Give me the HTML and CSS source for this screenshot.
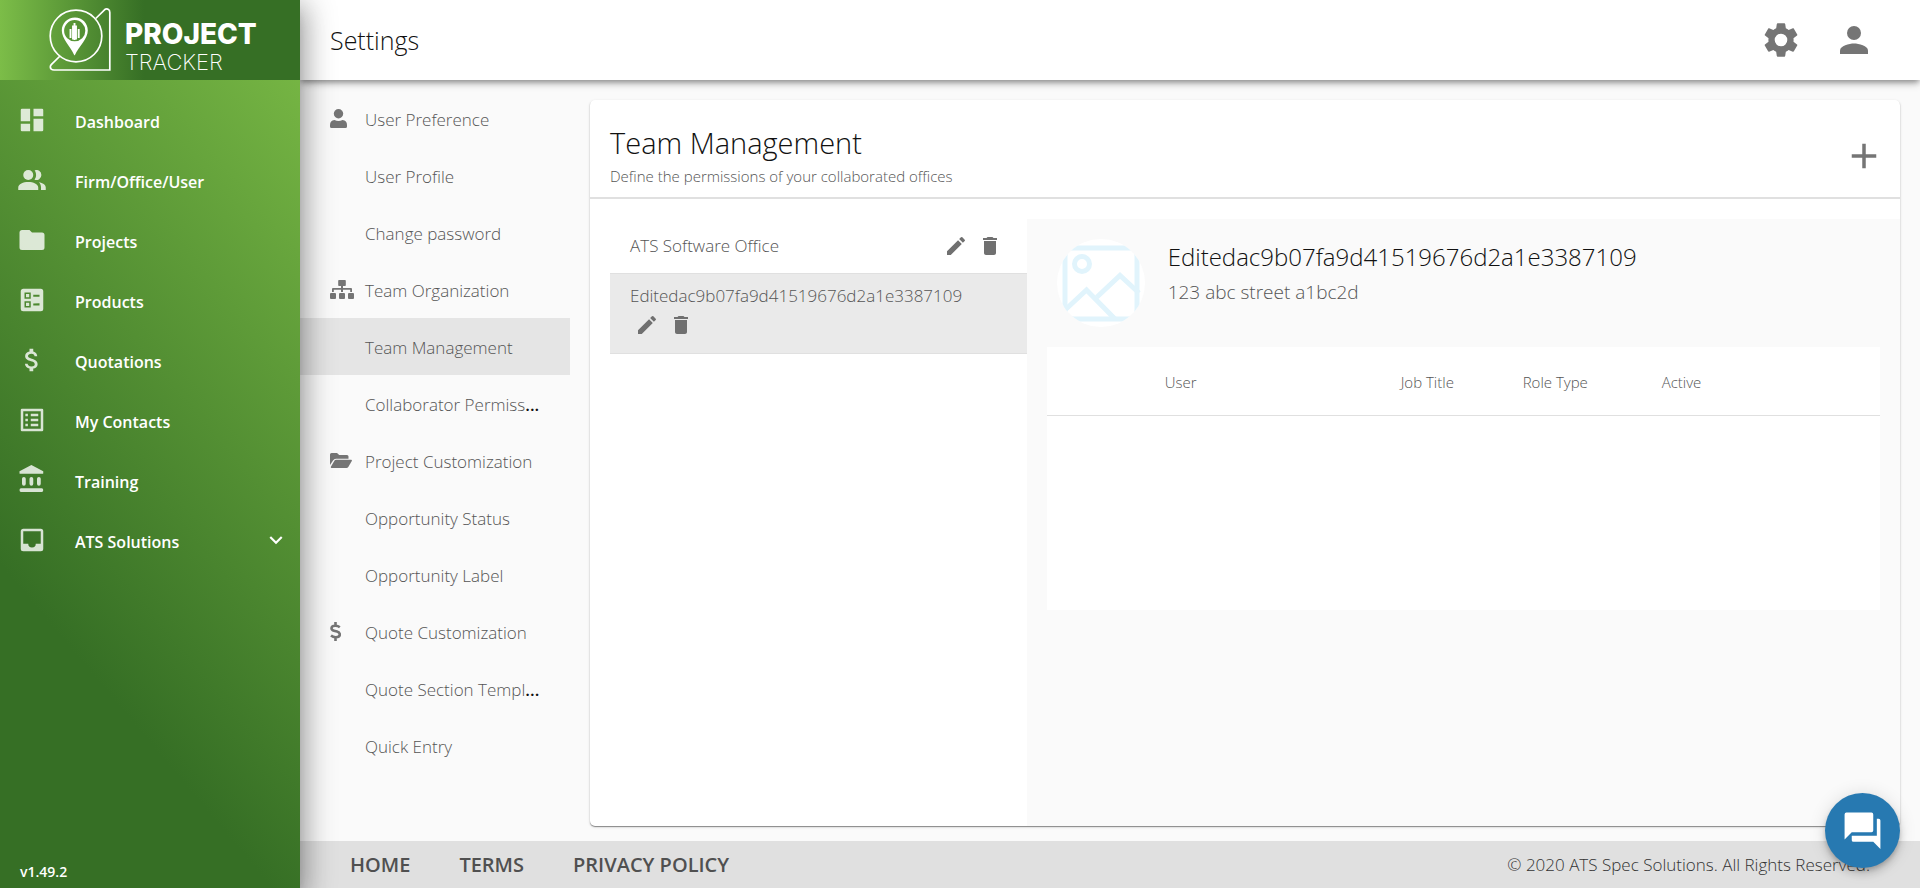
FILE: index.html
```html
<!DOCTYPE html>
<html lang="en">
<head>
<meta charset="utf-8">
<title>Settings - Project Tracker</title>
<link rel="stylesheet" href="styles.css">
</head>
<body>
<svg class="sprite" aria-hidden="true">
  <symbol id="pencil" viewBox="0 0 24 24"><path d="M3 17.25V21h3.75L17.81 9.94l-3.75-3.75L3 17.25zM20.71 7.04a1 1 0 0 0 0-1.41l-2.34-2.34a1 1 0 0 0-1.41 0l-1.83 1.83 3.75 3.75 1.83-1.83z"/></symbol>
  <symbol id="trash" viewBox="0 0 24 24"><path d="M6 19c0 1.1.9 2 2 2h8c1.100 0 2-.9 2-2V7H6v12zM19 4h-3.500l-1-1h-5l-1 1H5v2h14V4z"/></symbol>
</svg>
<div class="app">
  <aside class="sidebar">
    <a class="brand" href="#">
      <svg class="brand-mark" viewBox="0 0 62 64" fill="none" stroke="#fff" stroke-width="1.700">
        <circle cx="27" cy="28" r="25.800"/>
        <path d="M46.700 10.500 55.500 1.800Q57.500.300 59.500 1.500 60.800 2.300 60.800 4.500V62H5Q1.500 62 1.300 59 1.300 57.500 2.500 56.300L11 48"/>
        <path fill="#fff" stroke="none" fill-rule="evenodd" d="M26 9.500c-7.500 0-13.200 5.700-13.200 13 0 8 8.200 15.500 12.500 24.700h.5c4.500-9.200 13-16.700 13-24.700 0-7.300-5.500-13-12.800-13zm-.3 2.600a10.600 10.600 0 1 1 0 21.200 10.600 10.600 0 0 1 0-21.200z"/>
        <path stroke-width="1.900" d="M21.500 21v9M24 17.500v14M27 17.500v14M29.700 21v9M25.500 15v17"/>
      </svg>
      <span class="brand-text"><strong>PROJECT</strong><span>TRACKER</span></span>
    </a>
    <nav class="menu">
      <a href="#"><svg viewBox="0 0 24 24"><path d="M4 3h6.500v10H3V4a1 1 0 0 1 1-1zm9.200 0H20a1 1 0 0 1 1 1v5h-7.800zM3 15h7.500v6H4a1 1 0 0 1-1-1zm10.200-4H21v9a1 1 0 0 1-1 1h-6.800z"/></svg><span>Dashboard</span></a>
      <a href="#"><svg viewBox="0 0 24 24"><circle cx="9" cy="8" r="4"/><path d="M1 18c0-3 4-4.500 8-4.500s8 1.500 8 4.500v2H1zM14 4.300A4 4 0 1 1 14 11.700c1.700-2.200 1.700-5.200 0-7.400zM17.500 13.700c3 .4 5.500 1.900 5.500 4.300v2h-3.800v-2c0-1.800-.6-3.200-1.700-4.300z"/></svg><span>Firm/Office/User</span></a>
      <a href="#"><svg viewBox="0 0 24 24"><path d="M4 4h6l2 2h8a2 2 0 0 1 2 2v10a2 2 0 0 1-2 2H4a2 2 0 0 1-2-2V6c0-1.100.9-2 2-2z"/></svg><span>Projects</span></a>
      <a href="#"><svg viewBox="0 0 24 24"><path fill-rule="evenodd" d="M5 3h14a2 2 0 0 1 2 2v14a2 2 0 0 1-2 2H5a2 2 0 0 1-2-2V5c0-1.100.9-2 2-2zm1 3v5h5V6zm1.200 1.200h2.600v2.600H7.200zM6 13v5h5v-5zm1.200 1.200h2.600v2.600H7.200zM13 7.700v1.600h5V7.700zm0 7v1.600h5v-1.600z"/></svg><span>Products</span></a>
      <a href="#"><svg viewBox="0 0 24 24"><path d="M11.800 10.900c-2.270-.59-3-1.200-3-2.150 0-1.090 1.010-1.850 2.700-1.850 1.780 0 2.440.85 2.500 2.100h2.210c-.07-1.720-1.120-3.300-3.210-3.810V3h-3v2.160c-1.940.42-3.500 1.680-3.500 3.610 0 2.310 1.910 3.460 4.700 4.130 2.500.6 3 1.480 3 2.410 0 .69-.49 1.790-2.700 1.790-2.060 0-2.870-.92-2.980-2.100h-2.200c.12 2.190 1.760 3.420 3.680 3.830V21h3v-2.150c1.950-.37 3.500-1.500 3.500-3.550 0-2.840-2.430-3.810-4.700-4.400z"/></svg><span>Quotations</span></a>
      <a href="#"><svg viewBox="0 0 24 24"><path fill-rule="evenodd" d="M4 3h16a1 1 0 0 1 1 1v16a1 1 0 0 1-1 1H4a1 1 0 0 1-1-1V4a1 1 0 0 1 1-1zm1 2v14h14V5zM6.700 7h2v2h-2zM11 7h6v2h-6zM6.700 11h2v2h-2zM11 11h6v2h-6zM6.700 15h2v2h-2zM11 15h6v2h-6z"/></svg><span>My Contacts</span></a>
      <a href="#"><svg viewBox="0 0 24 24"><path d="M11.500 0 21 5v1.500q0 .5-.5.500h-18Q2 7 2 6.500V5zM3.200 18.500h16.600q1.200 0 1.200 1.500t-1.200 1.500H3.200Q2 21.500 2 20t1.200-1.500z"/><path d="M5.500 11v4M11.500 11v4M17.500 11v4" stroke="#fff" stroke-width="3" stroke-linecap="round"/></svg><span>Training</span></a>
      <a href="#"><svg viewBox="0 0 24 24"><path fill-rule="evenodd" d="M5 3h14a2 2 0 0 1 2 2v14a2 2 0 0 1-2 2H5a2 2 0 0 1-2-2V5c0-1.100.9-2 2-2zm0 2v10h4a3 3 0 0 0 6 0h4V5z"/></svg><span>ATS Solutions</span><svg class="chevron" viewBox="0 0 24 24"><path d="M7.400 8.600 12 13.200l4.600-4.600L18 10l-6 6-6-6z"/></svg></a>
    </nav>
    <p class="version">v1.49.2</p>
  </aside>

  <div class="page">
    <header class="topbar">
      <h1>Settings</h1>
      <button type="button" aria-label="Settings"><svg viewBox="0 0 24 24"><path d="M19.140 12.940c.04-.3.060-.61.060-.94 0-.32-.02-.64-.07-.94l2.030-1.580c.18-.14.23-.41.120-.61l-1.920-3.320c-.12-.22-.37-.29-.59-.22l-2.390.96c-.5-.38-1.030-.7-1.620-.94l-.36-2.540c-.04-.24-.24-.41-.48-.41h-3.840c-.24 0-.43.17-.47.410l-.36 2.540c-.59.24-1.130.57-1.620.94l-2.390-.96c-.22-.08-.47 0-.59.22L2.740 8.870c-.12.21-.08.47.120.61l2.030 1.580c-.05.3-.09.63-.09.940s.02.64.070.94l-2.030 1.580c-.18.14-.23.41-.12.61l1.920 3.320c.12.22.37.29.59.22l2.390-.96c.5.38 1.030.7 1.620.940l.36 2.540c.05.24.24.41.48.410h3.840c.24 0 .44-.17.470-.41l.36-2.540c.59-.24 1.130-.56 1.620-.94l2.390.96c.22.080.47 0 .59-.22l1.920-3.320c.12-.22.070-.47-.12-.61l-2.010-1.580zM12 15.600a3.600 3.600 0 1 1 0-7.200 3.600 3.600 0 0 1 0 7.200z"/></svg></button>
      <button type="button" aria-label="Account"><svg viewBox="0 0 24 24"><circle cx="12" cy="8" r="4"/><path d="M12 14c-2.670 0-8 1.340-8 4v2h16v-2c0-2.660-5.330-4-8-4z"/></svg></button>
    </header>

    <div class="content">
      <nav class="settings-nav">
        <a href="#"><svg viewBox="0 0 17 19"><circle cx="8.500" cy="4.700" r="4.700"/><path d="M4.500 11Q8.500 12.800 12.500 11 17 11.500 17 16v1.500A1.500 1.500 0 0 1 15.500 19h-14A1.500 1.500 0 0 1 0 17.500V16q0-4.500 4.500-5z"/></svg><span><i>User Preference</i></span></a>
        <a href="#"><span><i>User Profile</i></span></a>
        <a href="#"><span><i>Change password</i></span></a>
        <a href="#"><svg class="wide" viewBox="0 0 24 19"><path d="M9 0h6a.8.8 0 0 1 .8.800v4.400a.8.8 0 0 1-.8.800h-2v2h8a1 1 0 0 1 1 1v3h-1.800V9.800H13V12h-2V9.800H3.800V12H2V9a1 1 0 0 1 1-1h8V6H9a.8.8 0 0 1-.8-.8V.8A.8.8 0 0 1 9 0z"/><rect y="13" width="6" height="6" rx="1"/><rect x="9" y="13" width="6" height="6" rx="1"/><rect x="18" y="13" width="6" height="6" rx="1"/></svg><span><i>Team Organization</i></span></a>
        <a href="#" class="active" aria-current="page"><span><i>Team Management</i></span></a>
        <a href="#"><span><i>Collaborator Permiss</i>...</span></a>
        <a href="#"><svg class="folder" viewBox="0 0 22 15"><path d="M1.500 0H7l2.200 2H17a1.500 1.500 0 0 1 1.500 1.500V5.700H6Q4 5.700 3 7.500L0 12V1.500A1.500 1.500 0 0 1 1.500 0z"/><path d="M6 6.700h15.200q1 .2.600 1.200l-3.500 6q-.7 1.100-1.800 1.100H1.500q-1-.2-.6-1.200l3.500-6Q5 6.800 6 6.700z"/></svg><span><i>Project Customization</i></span></a>
        <a href="#"><span><i>Opportunity Status</i></span></a>
        <a href="#"><span><i>Opportunity Label</i></span></a>
        <a href="#"><svg class="dollar" viewBox="0 0 11 19" fill="none"><path stroke="#757575" stroke-width="2.600" d="M9.800 5.200Q7.800 3.700 5.200 3.800 1.500 4 1.500 6.200 1.500 8 4 8.700L7 9.500q2.800.8 2.800 3 0 2.500-3.800 2.700-2.900.1-5-1.600M5.500 0v4M5.500 15v4"/></svg><span><i>Quote Customization</i></span></a>
        <a href="#"><span><i>Quote Section Templ</i>...</span></a>
        <a href="#"><span><i>Quick Entry</i></span></a>
      </nav>

      <main class="card">
        <header class="card-head">
          <div>
            <h2>Team Management</h2>
            <p>Define the permissions of your collaborated offices</p>
          </div>
          <button type="button" aria-label="Add team"><svg viewBox="0 0 24 24"><path d="M19 13h-6v6h-2v-6H5v-2h6V5h2v6h6z"/></svg></button>
        </header>
        <div class="card-body">
          <ul class="offices">
            <li>
              <span>ATS Software Office</span>
              <div class="actions">
                <button type="button" aria-label="Edit"><svg viewBox="0 0 24 24"><use href="#pencil"/></svg></button><button type="button" aria-label="Delete"><svg viewBox="0 0 24 24"><use href="#trash"/></svg></button>
              </div>
            </li>
            <li class="selected">
              <span>Editedac9b07fa9d41519676d2a1e3387109</span>
              <div class="actions">
                <button type="button" aria-label="Edit"><svg viewBox="0 0 24 24"><use href="#pencil"/></svg></button><button type="button" aria-label="Delete"><svg viewBox="0 0 24 24"><use href="#trash"/></svg></button>
              </div>
            </li>
          </ul>
          <section class="detail">
            <div class="office">
              <svg class="avatar" viewBox="0 0 88 88">
                <clipPath id="round"><circle cx="44" cy="44" r="44"/></clipPath>
                <circle cx="44" cy="44" r="44" fill="#fff"/>
                <g clip-path="url(#round)" fill="none" stroke="#e1f4fc" stroke-width="5">
                  <rect x="8" y="9" width="72" height="71" rx="5"/>
                  <circle cx="25" cy="25" r="7.500"/>
                  <path d="M8 71 29.500 51 58 80M40 58 63 36.500 82 54"/>
                </g>
              </svg>
              <div>
                <h3>Editedac9b07fa9d41519676d2a1e3387109</h3>
                <p>123 abc street a1bc2d</p>
              </div>
            </div>
            <div class="table-wrap">
              <table>
                <colgroup><col class="c-pic"><col class="c-user"><col class="c-job"><col class="c-role"><col></colgroup>
                <thead><tr><td></td><th>User</th><th>Job Title</th><th>Role Type</th><th>Active</th></tr></thead>
              </table>
            </div>
          </section>
        </div>
      </main>
    </div>

    <footer class="footer">
      <a href="#">HOME</a><a href="#">TERMS</a><a href="#">PRIVACY POLICY</a>
      <p>© 2020 ATS Spec Solutions. All Rights Reserved.</p>
    </footer>
  </div>
</div>
<button class="chat" type="button" aria-label="Chat"><svg viewBox="0 0 24 24"><path d="M21 6h-1v9.500H6V18q0 .9 1 .9h11l4 4V7q0-1-1-1z" transform="translate(0 -.6)"/><path d="M18 12V3q0-1-1-1H3Q2 2 2 3v14l4-4h11q1 0 1-1z"/></svg></button>
</body>
</html>
```

FILE: styles.css
```css
* { box-sizing: border-box; }
body {
  margin: 0;
  font-family: "Open Sans", sans-serif;
  font-size: 17px;
  font-weight: 300;
  color: #111;
  background: #fafafa;
}
h1, h2, h3, p, ul { margin: 0; padding: 0; font-weight: inherit; }
a { color: inherit; text-decoration: none; }
button { padding: 0; border: 0; background: none; cursor: pointer; }
svg { display: block; flex: none; }
.sprite { position: absolute; width: 0; height: 0; }

.app { display: flex; min-height: 100vh; }

/* Sidebar */
.sidebar {
  position: relative;
  z-index: 3;
  flex: none;
  width: 300px;
  display: flex;
  flex-direction: column;
  color: #fff;
  background: linear-gradient(50deg, #366f25 26%, #7bbb46 100%);
  box-shadow: 0 8px 10px -5px rgba(0, 0, 0, .2), 0 16px 24px 2px rgba(0, 0, 0, .14), 0 6px 30px 5px rgba(0, 0, 0, .3);
}
.brand {
  display: flex;
  gap: 14px;
  height: 80px;
  padding: 8px 0 0 49px;
  background: linear-gradient(90deg, #7cbd48, #366f25 48%);
}
.brand-mark { width: 62px; height: 64px; }
.brand-text {
  display: flex;
  flex-direction: column;
  font-family: Inter, sans-serif;
  padding-top: 11px;
}
.brand-text strong { font-size: 28px; line-height: 30px; font-weight: 800; }
.brand-text span { font-size: 22px; line-height: 26px; font-weight: 200; }
.menu { flex: 1; padding-top: 10px; }
.menu a {
  display: flex;
  align-items: center;
  height: 60px;
  padding: 0 11px 0 17px;
  gap: 28px;
  font-size: 16px;
  font-weight: 600;
}
.menu span { padding-top: 3px; }
.menu svg { width: 30px; height: 30px; fill: #fff; opacity: .8; }
.menu .chevron { width: 26px; height: 26px; margin-left: auto; opacity: 1; }
.version { padding: 0 20px 6px; font-size: 14px; line-height: 20px; font-weight: 600; }

.page { flex: 1; min-width: 0; display: flex; flex-direction: column; }

/* Top bar */
.topbar {
  position: relative;
  z-index: 2;
  display: flex;
  align-items: center;
  gap: 31px;
  height: 80px;
  padding: 0 45px 0 30px;
  background: #fff;
  box-shadow: 0 3px 5px -1px rgba(0, 0, 0, .3), 0 5px 8px -1px rgba(0, 0, 0, .2);
}
.topbar h1 { flex: 1; font-size: 25px; line-height: 32px; }
.topbar svg, .card-head svg { width: 42px; height: 42px; fill: #757575; }

.content { flex: 1; display: flex; gap: 20px; padding: 10px 20px 15px 0; }

/* Settings navigation */
.settings-nav { flex: none; width: 270px; }
.settings-nav a {
  display: flex;
  align-items: center;
  height: 57px;
  padding: 0 20px 0 65px;
}
.settings-nav svg { width: 17px; height: 19px; margin: 0 18px 0 -35px; fill: #757575; }
.settings-nav svg.wide { width: 24px; margin-right: 11px; }
.settings-nav svg.folder { width: 22px; height: 15px; margin-right: 13px; }
.settings-nav svg.dollar { width: 11px; margin-right: 24px; fill: none; }
.settings-nav span { padding-top: 2px; white-space: nowrap; font-weight: 600; }
.settings-nav i { font-style: normal; font-weight: 300; color: #555; }
.settings-nav .active { background: #e5e5e5; }

/* Card */
.card {
  flex: 1;
  min-width: 0;
  display: flex;
  flex-direction: column;
  margin-top: 10px;
  background: #fff;
  border-radius: 5px;
  box-shadow: 0 1px 1px rgba(0, 0, 0, .4), 0 1px 3px rgba(0, 0, 0, .14);
}
.card-head {
  display: flex;
  align-items: center;
  justify-content: space-between;
  padding: 22px 15px 8px 20px;
  border-bottom: 2px solid #e0e0e0;
}
.card-head h2 { font-size: 29px; line-height: 42px; }
.card-head p { font-size: 15px; line-height: 25px; color: #555; }
.card-body { flex: 1; display: flex; padding-top: 20px; }
.offices { flex: 1; min-width: 0; padding-left: 20px; list-style: none; }
.offices li {
  display: flex;
  flex-wrap: wrap;
  align-items: center;
  justify-content: space-between;
  min-height: 55px;
  padding: 10px 20px;
  border-bottom: 1px solid #e0e0e0;
  line-height: 24px;
  color: #555;
}
.offices .selected {
  display: block;
  padding-bottom: 11px;
  background: #eaeaea;
}
.actions { display: flex; gap: 10px; padding: 5px; }
.offices svg { width: 24px; height: 24px; fill: #707070; }

.detail { flex: 2; min-width: 0; padding: 20px; background: #fafafa; border-radius: 0 0 5px 0; }
.office { display: flex; gap: 23px; padding: 0 10px; }
.avatar { width: 88px; height: 88px; }
.office h3 { font-size: 24px; line-height: 36px; }
.office p { font-size: 19px; line-height: 34px; color: #555; }
.table-wrap { height: 263px; margin-top: 20px; background: #fff; }
table { width: 100%; border-collapse: collapse; table-layout: fixed; }
th, td { height: 68px; padding: 3px 0 0; border-bottom: 1px solid #e0e0e0; }
th { text-align: left; font-size: 15px; font-weight: 300; color: #555; }
.c-pic { width: 118px; }
.c-user { width: 236px; }
.c-job { width: 122px; }
.c-role { width: 139px; }

/* Footer */
.footer {
  display: flex;
  align-items: center;
  gap: 49px;
  min-height: 47px;
  padding: 0 50px;
  background: #e0e0e0;
}
.footer a { font-size: 20px; line-height: 27px; font-weight: 600; color: #505050; }
.footer p { margin-left: auto; color: #333; }

.chat {
  position: fixed;
  z-index: 4;
  right: 20px;
  bottom: 20px;
  width: 75px;
  height: 75px;
  display: grid;
  place-items: center;
  border-radius: 50%;
  background: #2779b1;
  box-shadow: 0 3px 5px -1px rgba(0, 0, 0, .2), 0 6px 10px rgba(0, 0, 0, .14), 0 1px 18px rgba(0, 0, 0, .12);
}
.chat svg { width: 43px; height: 43px; fill: #fff; }
```
